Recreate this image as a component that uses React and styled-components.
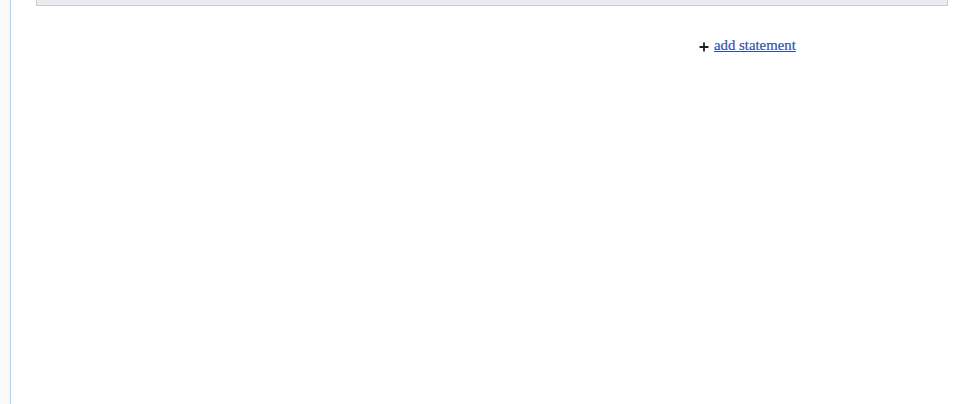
import React from "react";
import styled, { createGlobalStyle } from "styled-components";

const Global = createGlobalStyle`
  html, body { margin: 0; padding: 0; background: #fff; }
  body { font-family: "Liberation Serif", serif; }
`;

const Page = styled.div`
  display: flex;
  min-height: 404px;
`;

const Sidebar = styled.div`
  width: 10px;
  flex: none;
  background: #f8f9fa;
  border-right: 1px solid #a7d7f9;
`;

const Content = styled.div`
  flex: 1;
  padding-left: 25px;
  padding-right: 22px;
`;

const Box = styled.div`
  height: 5px;
  background: #eaecf0;
  border: 1px solid #c8ccd1;
  border-top: none;
`;

const Toolbar = styled.div`
  display: flex;
  align-items: center;
  padding-left: 663px;
  margin-top: 29px;
  gap: 5px;
`;

const Plus = styled.svg`
  width: 10px;
  height: 10px;
  flex: none;
  margin-top: 3px;
`;

const Link = styled.a`
  font-family: "Liberation Serif", serif;
  font-size: 14.8px;
  color: #2f51a3;
  text-decoration: underline;
  line-height: 20px;
  -webkit-text-stroke: 0.2px #2f51a3;
`;

export default function App() {
  return (
    <>
      <Global />
      <Page>
        <Sidebar />
        <Content>
          <Box />
          <Toolbar>
            <Plus viewBox="0 0 10 10">
              <path d="M5 0.5v9M0.5 5h9" stroke="#202122" strokeWidth="1.8" />
            </Plus>
            <Link href="#">add statement</Link>
          </Toolbar>
        </Content>
      </Page>
    </>
  );
}
